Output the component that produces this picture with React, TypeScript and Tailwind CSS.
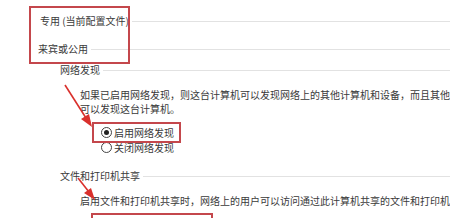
import React from 'react';

const font = { fontFamily: '"Noto Sans CJK SC", "Noto Sans", sans-serif' };

const Heading = ({ label, indent }: { label: string; indent: string }) => (
    <div className={`flex items-center h-[14px] leading-[14px] ${indent}`}>
        <span className="whitespace-nowrap">{label}</span>
        <div className="flex-1 h-px bg-[#e2e2e2] ml-[3px]" />
    </div>
);

const Radio = ({ label, checked }: { label: string; checked?: boolean }) => (
    <div className="flex items-center h-[13px] pl-[101px]">
        <span className="w-[11px] h-[11px] rounded-full border border-[#444] flex items-center justify-center bg-white">
            {checked && <span className="w-[5px] h-[5px] rounded-full bg-[#222]" />}
        </span>
        <span className="ml-[2px] leading-[13px] whitespace-nowrap">{label}</span>
    </div>
);

export default function App() {
    return (
        <div
            className="relative w-[450px] h-[218px] overflow-hidden bg-white text-[10px] text-[#3a3a3a] pt-[14px]"
            style={font}
        >
            <Heading label="专用 (当前配置文件)" indent="pl-[40px]" />
            <div className="mt-[14px]">
                <Heading label="来宾或公用" indent="pl-[38px]" />
            </div>
            <div className="mt-[7px]">
                <Heading label="网络发现" indent="pl-[60px]" />
            </div>

            <div className="mt-[11px] pl-[80px] leading-[14px] whitespace-nowrap">
                <div>如果已启用网络发现，则这台计算机可以发现网络上的其他计算机和设备，而且其他</div>
                <div>可以发现这台计算机。</div>
            </div>

            <div className="mt-[10px] flex flex-col gap-[2px]">
                <Radio label="启用网络发现" checked />
                <Radio label="关闭网络发现" />
            </div>

            <div className="mt-[15px]">
                <Heading label="文件和打印机共享" indent="pl-[60px]" />
            </div>

            <div className="mt-[11px] pl-[80px] leading-[14px] whitespace-nowrap">
                启用文件和打印机共享时，网络上的用户可以访问通过此计算机共享的文件和打印机
            </div>

            {/* annotation boxes */}
            <div className="absolute left-[29px] top-[6px] w-[101px] h-[58px] border-2 border-[#c4474c]" />
            <div className="absolute left-[92px] top-[122px] w-[89px] h-[21px] border-2 border-[#c4474c]" />
            <div className="absolute left-[91px] top-[213px] w-[122px] h-[20px] border-2 border-[#c4474c]" />

            {/* annotation arrows */}
            <svg className="absolute inset-0" width="450" height="218" viewBox="0 0 450 218">
                <line x1="65" y1="85" x2="86" y2="118" stroke="#d9302c" strokeWidth="1.6" />
                <polygon points="92,127 81,119 89,114" fill="#d9302c" />
                <line x1="78" y1="178" x2="89" y2="192" stroke="#d9302c" strokeWidth="1.6" />
                <polygon points="95,200 84,193 91,188" fill="#d9302c" />
            </svg>
        </div>
    );
}
